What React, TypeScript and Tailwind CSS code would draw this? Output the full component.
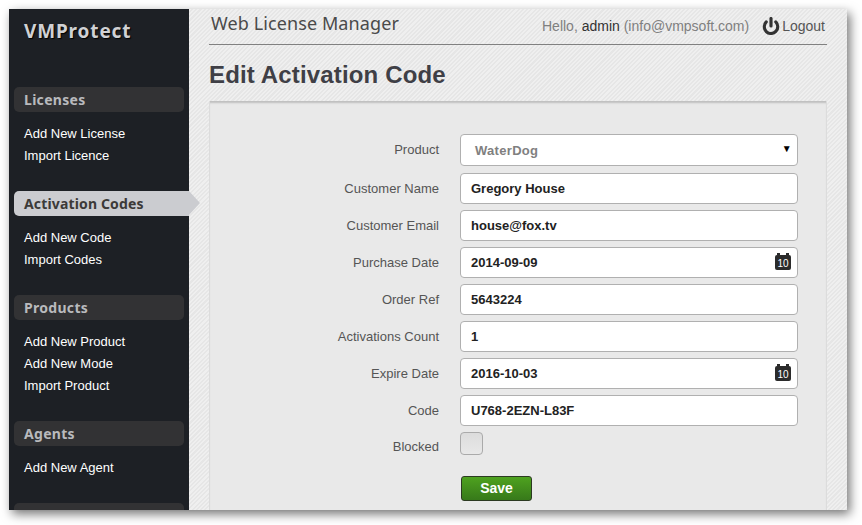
import { Power } from "lucide-react";

const stripes =
  "bg-[repeating-linear-gradient(135deg,#e6e6e6_0px,#e6e6e6_1.5px,#efefef_1.5px,#efefef_3px)]";

const sections = [
  { title: "Licenses", links: ["Add New License", "Import Licence"] },
  { title: "Activation Codes", links: ["Add New Code", "Import Codes"], active: true },
  { title: "Products", links: ["Add New Product", "Add New Mode", "Import Product"] },
  { title: "Agents", links: ["Add New Agent"] },
];

const fields = [
  { label: "Customer Name", value: "Gregory House" },
  { label: "Customer Email", value: "house@fox.tv" },
  { label: "Purchase Date", value: "2014-09-09", date: true },
  { label: "Order Ref", value: "5643224" },
  { label: "Activations Count", value: "1" },
  { label: "Expire Date", value: "2016-10-03", date: true },
  { label: "Code", value: "U768-2EZN-L83F" },
];

function CalendarIcon() {
  return (
    <svg width="16" height="17" viewBox="0 0 16 17" className="absolute right-[6px] top-[5px]">
      <rect x="0" y="2" width="16" height="15" rx="2" fill="#2b2b2b" />
      <rect x="2" y="0" width="3" height="3" fill="#2b2b2b" />
      <rect x="11" y="0" width="3" height="3" fill="#2b2b2b" />
      <text x="8" y="14" textAnchor="middle" fontSize="10" fontWeight="400" fill="#fff" fontFamily="Liberation Sans">
        10
      </text>
    </svg>
  );
}

function Sidebar() {
  return (
    <div className="h-full w-[180px] shrink-0 bg-[#1d2025] px-[5px]">
      <div className="h-[78px] pl-[10px] pt-[9px] font-['Noto_Sans'] text-[19px] font-bold leading-[26px] tracking-[0.85px] text-[#d0d1d4] [text-shadow:1px_1px_1px_#000]">
        VMProtect
      </div>
      {sections.map(section => (
        <div key={section.title} className="mb-[24px]">
          {section.active ? (
            <div className="relative h-[25px] w-[175px] rounded-l-[5px] bg-[#cbccd0] pl-[10px] font-['Noto_Sans'] text-[14px] font-bold leading-[25px] tracking-[0.15px] text-[#3c3a38]">
              {section.title}
              <div className="absolute left-[175px] top-0 h-0 w-0 border-y-[12.5px] border-l-[11px] border-y-transparent border-l-[#cbccd0]" />
            </div>
          ) : (
            <div className="h-[25px] rounded-[5px] bg-[#323234] pl-[10px] font-['Noto_Sans'] text-[14px] font-bold leading-[25px] tracking-[0.3px] text-[#b9babd]">
              {section.title}
            </div>
          )}
          <ul className="pl-[10px] pt-[11px]">
            {section.links.map(link => (
              <li key={link} className="font-['Liberation_Sans'] text-[13px] leading-[22px] text-white">
                {link}
              </li>
            ))}
          </ul>
        </div>
      ))}
      <div className="h-[25px] rounded-[5px] bg-[#323234]" />
    </div>
  );
}

export default function App() {
  return (
    <div className="h-[525px] w-[862px] overflow-hidden bg-white pl-[9px] pt-[9px]">
      <div className={`flex h-[501px] w-[838px] overflow-hidden shadow-[3px_4px_10px_rgba(0,0,0,0.55)] ${stripes}`}>
        <Sidebar />
        <main className="w-[658px] px-[20px]">
          <header className="flex h-[36px] items-start justify-between border-b border-[#808080]">
            <span className="pl-[2px] font-['Noto_Sans'] text-[18px] leading-[29px] tracking-[0.1px] text-[#4a4a4a]">
              Web License Manager
            </span>
            <div className="flex items-center pr-[2px] pt-[7px] font-['Liberation_Sans'] text-[14px] leading-[20px] text-[#808080]">
              <span>
                Hello, <span className="text-[#333]">admin</span> (info@vmpsoft.com)
              </span>
              <Power size={18} strokeWidth={4.2} className="ml-[13px] mr-[2px] -mt-[1px] text-[#333]" />
              <span className="text-[#555]">Logout</span>
            </div>
          </header>
          <h1 className="pt-[15px] font-['Liberation_Sans'] text-[24px] font-bold leading-[30px] tracking-[0.15px] text-[#3f3f46]">
            Edit Activation Code
          </h1>
          <section className="mt-[11px] h-[420px] border-x border-[#dcdcdc] bg-[#e9e9e9] pt-[33px] shadow-[inset_0_3px_2px_-1px_rgba(0,0,0,0.18)]">
            <form className="font-['Liberation_Sans'] text-[13px]">
              <div className="mb-[6px] flex h-[32px] items-center">
                <label className="w-[229px] text-right text-[#555]">Product</label>
                <div className="relative ml-[21px] flex h-[32px] w-[338px] items-center rounded-[4px] border border-[#b0b0b0] bg-white pl-[14px] pt-[2px] font-bold tracking-[0.3px] text-[#808080]">
                  WaterDog
                  <span className="absolute right-[5px] top-[6px] text-[10px] text-black">▼</span>
                </div>
              </div>
              {fields.map(field => (
                <div key={field.label} className="mb-[5px] flex h-[32px] items-center">
                  <label className="w-[229px] pt-[2px] text-right text-[#555]">{field.label}</label>
                  <div className="relative ml-[21px] flex h-[31px] w-[338px] items-center rounded-[4px] border border-[#b0b0b0] bg-white pl-[10px] pt-[2px] font-bold text-[#222]">
                    {field.value}
                    {field.date && <CalendarIcon />}
                  </div>
                </div>
              ))}
              <div className="mt-[6px] flex items-start">
                <label className="w-[229px] pt-[6px] text-right leading-[17px] text-[#555]">Blocked</label>
                <div className="ml-[21px] h-[23px] w-[23px] rounded-[4px] border border-[#aaa] bg-gradient-to-b from-[#dcdcdc] to-[#e8e8e8]" />
              </div>
              <div className="ml-[251px] mt-[21px]">
                <button
                  type="button"
                  className="h-[25px] w-[71px] rounded-[3px] border border-[#2c3a22] bg-gradient-to-b from-[#4ea21f] to-[#37791a] text-[14px] font-bold text-white"
                >
                  Save
                </button>
              </div>
            </form>
          </section>
        </main>
      </div>
    </div>
  );
}
